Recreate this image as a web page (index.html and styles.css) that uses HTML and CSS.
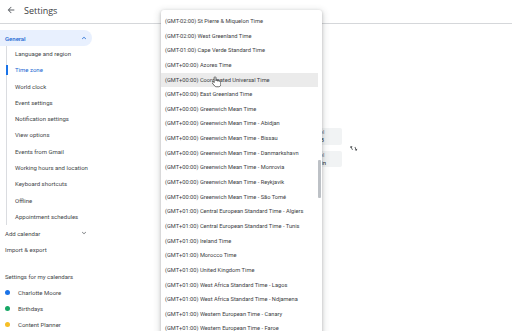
FILE: index.html
```html
<!DOCTYPE html>
<html>
<head>
<meta charset="utf-8">
<link rel="stylesheet" href="styles.css">
</head>
<body>
<header class="topbar">
  <svg class="back" width="10" height="10" viewBox="0 0 24 24"><path d="M20 11H7.83l5.59-5.59L12 4l-8 8 8 8 1.41-1.41L7.83 13H20v-2z" fill="#5f6368"/></svg>
  <span class="title">Settings</span>
</header>
<div class="main">
  <nav class="sidebar">
    <div class="pill"><span>General</span>
      <svg class="chev" width="8" height="8" viewBox="0 0 24 24"><path d="M7.41 15.41L12 10.83l4.59 4.58L18 14l-6-6-6 6z" fill="#1967d2"/></svg>
    </div>
    <ul class="subnav">
      <li>Language and region</li>
      <li class="active">Time zone</li>
      <li>World clock</li>
      <li>Event settings</li>
      <li>Notification settings</li>
      <li>View options</li>
      <li>Events from Gmail</li>
      <li>Working hours and location</li>
      <li>Keyboard shortcuts</li>
      <li>Offline</li>
      <li>Appointment schedules</li>
    </ul>
    <div class="toprow">Add calendar
      <svg class="chev" width="8" height="8" viewBox="0 0 24 24"><path d="M7.41 8.59L12 13.17l4.59-4.58L18 10l-6 6-6-6z" fill="#5f6368"/></svg>
    </div>
    <div class="toprow">Import &amp; export</div>
    <div class="toprow heading">Settings for my calendars</div>
    <div class="cal"><span class="dot blue"></span>Charlotte Moore</div>
    <div class="cal"><span class="dot green"></span>Birthdays</div>
    <div class="cal"><span class="dot yellow"></span>Content Planner</div>
  </nav>
  <section class="content">
    <div class="tzrow">
      <div class="cards">
        <div class="card"><span>Label</span><span class="val">GMB</span></div>
        <div class="card"><span>Label</span><span class="val">Spain</span></div>
      </div>
      <svg class="swap" width="9" height="10" viewBox="0 0 24 24"><path d="M5 3l-4 4h3v7h2V7h3L5 3zm9 18l4-4h-3v-7h-2v7h-3l4 4z" fill="#3c4043" transform="rotate(-25 12 12)"/></svg>
    </div>
  </section>
</div>

<div class="menu">
  <ul class="options">
    <li>(GMT-02:00) St Pierre &amp; Miquelon Time</li>
    <li>(GMT-02:00) West Greenland Time</li>
    <li>(GMT-01:00) Cape Verde Standard Time</li>
    <li>(GMT+00:00) Azores Time</li>
    <li class="hover">(GMT+00:00) Coordinated Universal Time</li>
    <li>(GMT+00:00) East Greenland Time</li>
    <li>(GMT+00:00) Greenwich Mean Time</li>
    <li>(GMT+00:00) Greenwich Mean Time - Abidjan</li>
    <li>(GMT+00:00) Greenwich Mean Time - Bissau</li>
    <li>(GMT+00:00) Greenwich Mean Time - Danmarkshavn</li>
    <li>(GMT+00:00) Greenwich Mean Time - Monrovia</li>
    <li>(GMT+00:00) Greenwich Mean Time - Reykjavik</li>
    <li>(GMT+00:00) Greenwich Mean Time - São Tomé</li>
    <li>(GMT+01:00) Central European Standard Time - Algiers</li>
    <li>(GMT+01:00) Central European Standard Time - Tunis</li>
    <li>(GMT+01:00) Ireland Time</li>
    <li>(GMT+01:00) Morocco Time</li>
    <li>(GMT+01:00) United Kingdom Time</li>
    <li>(GMT+01:00) West Africa Standard Time - Lagos</li>
    <li>(GMT+01:00) West Africa Standard Time - Ndjamena</li>
    <li>(GMT+01:00) Western European Time - Canary</li>
    <li>(GMT+01:00) Western European Time - Faroe</li>
  </ul>
  <div class="scrollbar"></div>
  <svg class="cursor" width="9" height="12" viewBox="0 0 18 24"><path d="M6 1.5c-1 0-1.7.8-1.7 1.7v10l-1.6-1.6c-.7-.7-1.8-.7-2.4 0-.6.6-.6 1.6 0 2.3l5 6c.9 1.1 2.2 1.6 3.6 1.6H13c2.6 0 4.5-2 4.5-4.5V11c0-.9-.7-1.6-1.6-1.6s-1.6.7-1.6 1.6v-.6c0-.9-.7-1.6-1.6-1.600-.9 0-1.6.7-1.6 1.6v-.7c0-.9-.7-1.6-1.6-1.6-.9 0-1.6.7-1.6 1.6V3.2C7.7 2.3 7 1.5 6 1.5z" fill="#fff" stroke="#222" stroke-width="1.3"/></svg>
</div>
</body>
</html>
```

FILE: styles.css
```css
* { box-sizing: border-box; }
html, body { margin: 0; padding: 0; }
body {
  width: 512px;
  height: 331px;
  overflow: hidden;
  background: #fff;
  font-family: Roboto, "Noto Sans", Arial, sans-serif;
  color: #44474a;
  font-size: 6px;
  position: relative;
}
ul { list-style: none; margin: 0; padding: 0; }

.topbar {
  height: 24px;
  border-bottom: 1px solid #d5d7da;
  display: flex;
  align-items: center;
  padding-left: 6px;
  padding-bottom: 3px;
}
.back { margin-right: 8px; }
.title {
  font-family: "Open Sans", Roboto, sans-serif;
  font-size: 9px;
  color: #3c4043;
}

.main { display: flex; }
.sidebar {
  width: 160px;
  padding-top: 6px;
}
.pill {
  width: 92px;
  height: 16px;
  background: #e8f0fe;
  border-radius: 0 8px 8px 0;
  display: flex;
  align-items: center;
  justify-content: space-between;
  padding: 0 4px 0 5px;
  color: #1967d2;
  font-weight: 500;
}
.subnav {
  margin-left: 6px;
  border-left: 1px solid #dadce0;
  padding: 0;
}
.subnav li {
  height: 16.3px;
  line-height: 16.3px;
  padding-left: 8px;
  white-space: nowrap;
  position: relative;
}
.subnav li.active { color: #1967d2; }
.subnav li.active::before {
  content: "";
  position: absolute;
  left: -1px;
  top: 3px;
  width: 1.5px;
  height: 10px;
  background: #1a73e8;
}
.toprow {
  height: 16.3px;
  width: 92px;
  display: flex;
  align-items: center;
  justify-content: space-between;
  padding: 0 4px 0 5px;
  white-space: nowrap;
}
.toprow.heading { margin-top: 10px; }
.cal {
  height: 16.3px;
  display: flex;
  align-items: center;
  padding-left: 5px;
}
.dot {
  width: 5px;
  height: 5px;
  border-radius: 50%;
  margin-right: 8px;
}
.dot.blue { background: #1a73e8; }
.dot.green { background: #16a765; }
.dot.yellow { background: #f6bf26; }

.content {
  flex: 1;
  padding-top: 104px;
}
.tzrow {
  display: flex;
  align-items: center;
  margin-left: 149px;
  gap: 8px;
}
.cards { display: flex; flex-direction: column; gap: 6px; }
.card {
  width: 33px;
  height: 16.5px;
  background: #f1f3f4;
  border-radius: 2px;
  padding: 1px 0 0 2px;
  display: flex;
  flex-direction: column;
  font-size: 5.5px;
  line-height: 7px;
  color: #5f6368;
}
.card .val { color: #202124; font-size: 6px; }

.menu {
  position: absolute;
  left: 161px;
  top: 10px;
  width: 161px;
  height: 330px;
  background: #fff;
  box-shadow: 0 1px 3px rgba(60,64,67,0.3), 0 2px 6px 2px rgba(60,64,67,0.15);
  border-radius: 3px;
  overflow: hidden;
}
.options { padding-top: 4px; }
.options li {
  height: 14.65px;
  line-height: 14.65px;
  padding-left: 4px;
  width: 157px;
  white-space: nowrap;
  font-size: 5.7px;
  color: #3c4043;
}
.options li.hover { background: #ebebeb; }
.scrollbar {
  position: absolute;
  left: 157px;
  top: 150px;
  width: 3px;
  height: 38px;
  background: #bdc1c6;
  border-radius: 1px;
}
.cursor {
  position: absolute;
  left: 51px;
  top: 66px;
}
```
